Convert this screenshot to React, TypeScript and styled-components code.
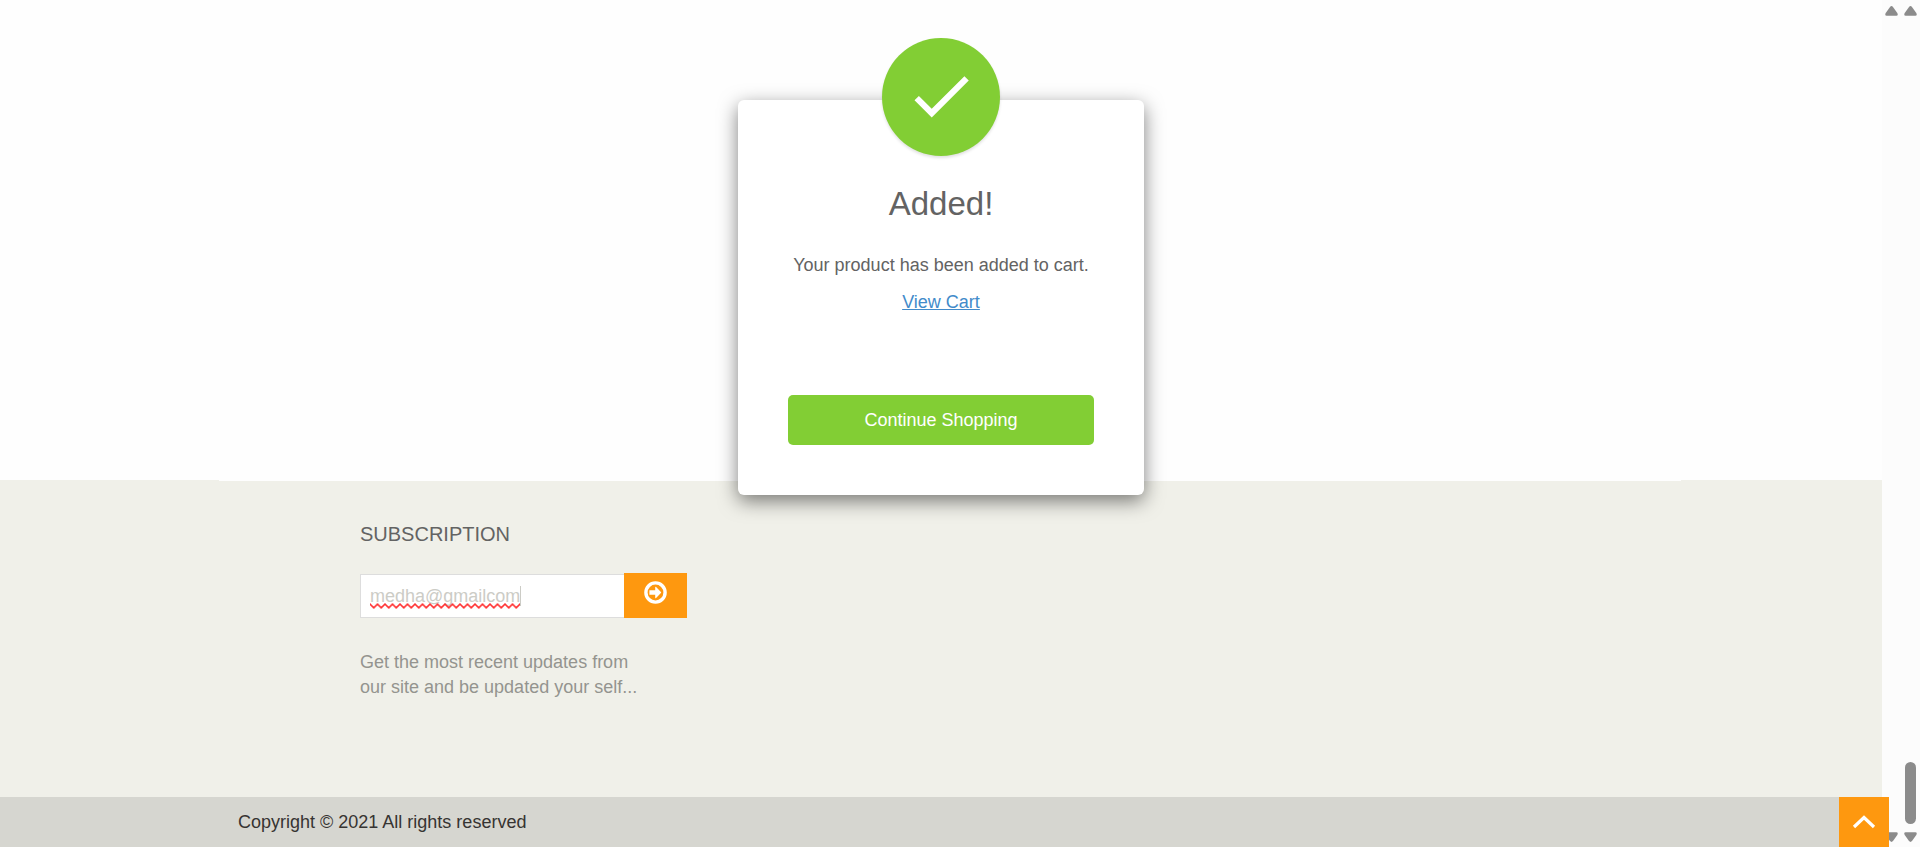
import React from "react";
import styled, { createGlobalStyle } from "styled-components";

const GlobalStyle = createGlobalStyle`
  *, *::before, *::after { box-sizing: border-box; }
  body {
    margin: 0;
    background: #fefefe;
    color: #636363;
    font-family: "Liberation Sans", Arial, sans-serif;
    font-size: 18px;
    line-height: 25px;
  }
  h2, h4, p { margin: 0; font-weight: 400; }
  button, input { font: inherit; }
`;

const Shell = styled.div`
  display: flex;
  min-height: 100vh;
`;

const Page = styled.div`
  position: relative;
  flex: 1;
  min-width: 0;
  display: flex;
  flex-direction: column;
`;

const Main = styled.main`
  flex: 1;
`;

const Footer = styled.footer`
  background: #f0f0e9;
`;

const FooterRow = styled.div`
  padding-left: 18px;
`;

const Container = styled.div`
  max-width: 1462px;
  margin: 0 auto;
`;

const FooterBody = styled(Container)`
  min-height: 317px;
  padding: 41px 141px 0;
  border-top: 1px solid #fefefe;
`;

const Subscription = styled.section`
  width: 327px;
`;

const FooterTitle = styled.h4`
  font-size: 20px;
  line-height: 24px;
  text-transform: uppercase;
`;

const SubscribeForm = styled.form`
  display: flex;
  align-items: flex-end;
  margin: 27px 0 32px;
`;

const EmailField = styled.div`
  position: relative;
  flex: 1;
  min-width: 0;
`;

const EmailInput = styled.input`
  display: block;
  width: 100%;
  height: 44px;
  padding: 0 9px;
  border: 1px solid #ddd;
  border-right: 0;
  border-radius: 0;
  outline: 0;
  background: #fff;
  color: #ccccc6;
`;

const Squiggle = styled.svg`
  position: absolute;
  left: 10px;
  bottom: 9px;
`;

const Caret = styled.span`
  position: absolute;
  left: 160px;
  top: 12px;
  width: 1px;
  height: 20px;
  background: #ccccc6;
`;

const SubmitButton = styled.button`
  display: flex;
  justify-content: center;
  width: 63px;
  height: 45px;
  padding: 8px 0 0;
  border: 0;
  background: #fe980f;
  color: #fff;
`;

const Note = styled.p`
  color: #94948f;
`;

const CopyrightBar = styled(FooterRow)`
  background: #d6d6d0;
`;

const Copyright = styled.p`
  padding: 13px 19px 12px;
  color: #363432;
`;

const TopLink = styled.a`
  position: absolute;
  right: -7px;
  bottom: 0;
  z-index: 2;
  display: flex;
  align-items: center;
  justify-content: center;
  width: 50px;
  height: 50px;
  background: #fe980f;
  color: #fff;
`;

const Dialog = styled.div`
  position: absolute;
  top: 100px;
  left: 50%;
  z-index: 1;
  transform: translateX(-50%);
  display: flex;
  flex-direction: column;
  align-items: center;
  width: 406px;
  padding: 84px 50px 50px;
  border-radius: 6px;
  background: #fff;
  box-shadow: 0 6px 19px rgba(0, 0, 0, 0.5);
  text-align: center;
`;

const CheckBadge = styled.div`
  position: absolute;
  top: -62px;
  left: 144px;
  display: flex;
  align-items: center;
  justify-content: center;
  width: 118px;
  height: 118px;
  padding-bottom: 2px;
  border-radius: 50%;
  background: #82ce34;
  box-shadow: 0 2px 3px rgba(0, 0, 0, 0.12);
`;

const DialogTitle = styled.h2`
  font-size: 33px;
  line-height: 40px;
`;

const DialogText = styled.p`
  margin-top: 29px;
`;

const CartLink = styled.a`
  margin-top: 12px;
  color: #428bca;
`;

const ContinueButton = styled.button`
  width: 100%;
  height: 50px;
  margin-top: 80px;
  padding: 0;
  border: 0;
  border-radius: 5px;
  background: #82ce34;
  color: #fff;
`;

const Track = styled.div`
  display: flex;
  flex-direction: column;
  align-items: center;
  justify-content: space-between;
  width: 19px;
  padding: 6px 0 5px;
  background: #fcfcfc;
  color: #8b8b8b;
`;

const Thumb = styled.div`
  width: 11px;
  height: 62px;
  margin: auto 0 8px;
  border-radius: 6px;
  background: currentColor;
`;

const UpArrow = () => (
  <svg width="13" height="10" viewBox="0 0 13 10" aria-hidden="true">
    <path d="M5 .9Q6.5-.7 8 .9L12.3 7Q13.6 9.8 11.3 9.8H1.7Q-.6 9.8 .7 7Z" fill="currentColor" />
  </svg>
);

const DownArrow = () => (
  <svg width="13" height="10" viewBox="0 0 13 10" aria-hidden="true">
    <path d="M5 9.1Q6.5 10.7 8 9.1L12.3 3Q13.6 .2 11.3 .2H1.7Q-.6 .2 .7 3Z" fill="currentColor" />
  </svg>
);

export default function App() {
  return (
    <>
      <GlobalStyle />
      <Shell>
        <Page>
          <Main>
            <Dialog role="dialog" aria-labelledby="added-title">
              <CheckBadge>
                <svg width="74" height="74" viewBox="0 0 24 24" aria-hidden="true">
                  <path d="M9 16.17 4.83 12l-1.42 1.41L9 19 21 7l-1.41-1.41z" fill="#fff" />
                </svg>
              </CheckBadge>
              <DialogTitle id="added-title">Added!</DialogTitle>
              <DialogText>Your product has been added to cart.</DialogText>
              <CartLink href="#cart">View Cart</CartLink>
              <ContinueButton type="button">Continue Shopping</ContinueButton>
            </Dialog>
          </Main>
          <Footer>
            <FooterRow>
              <FooterBody>
                <Subscription>
                  <FooterTitle>Subscription</FooterTitle>
                  <SubscribeForm onSubmit={(e) => e.preventDefault()}>
                    <EmailField>
                      <EmailInput type="text" aria-label="Email address" defaultValue="medha@gmailcom" spellCheck={false} />
                      <Squiggle width="150" height="6" aria-hidden="true">
                        <defs>
                          <pattern id="wave" width="7.5" height="6" patternUnits="userSpaceOnUse">
                            <path d="M-1.875 3 0 1.1 3.75 4.8 7.5 1.1 9.375 3" fill="none" stroke="#f33" strokeWidth="1.6" />
                          </pattern>
                        </defs>
                        <rect width="150" height="6" fill="url(#wave)" />
                      </Squiggle>
                      <Caret />
                    </EmailField>
                    <SubmitButton type="submit" aria-label="Subscribe">
                      <svg width="23" height="23" viewBox="0 0 23 23" aria-hidden="true">
                        <circle cx="11.5" cy="11.5" r="9.6" fill="none" stroke="currentColor" strokeWidth="3.4" />
                        <path d="M5.4 9.3h5.8V6.6q0-1.2.9-.5l4.8 4.8q.6.6 0 1.2l-4.8 4.8q-.9.7-.9-.5V13.7H5.4z" fill="currentColor" />
                      </svg>
                    </SubmitButton>
                  </SubscribeForm>
                  <Note>
                    Get the most recent updates from
                    <br />
                    our site and be updated your self...
                  </Note>
                </Subscription>
              </FooterBody>
            </FooterRow>
            <CopyrightBar>
              <Container>
                <Copyright>Copyright © 2021 All rights reserved</Copyright>
              </Container>
            </CopyrightBar>
          </Footer>
          <TopLink href="#top" aria-label="Back to top">
            <svg width="24" height="14" viewBox="0 0 24 14" aria-hidden="true">
              <path d="M2 12 12 2.5 22 12" fill="none" stroke="currentColor" strokeWidth="3.2" />
            </svg>
          </TopLink>
        </Page>
        <Track aria-hidden="true">
          <UpArrow />
          <DownArrow />
        </Track>
        <Track aria-hidden="true">
          <UpArrow />
          <Thumb />
          <DownArrow />
        </Track>
      </Shell>
    </>
  );
}
